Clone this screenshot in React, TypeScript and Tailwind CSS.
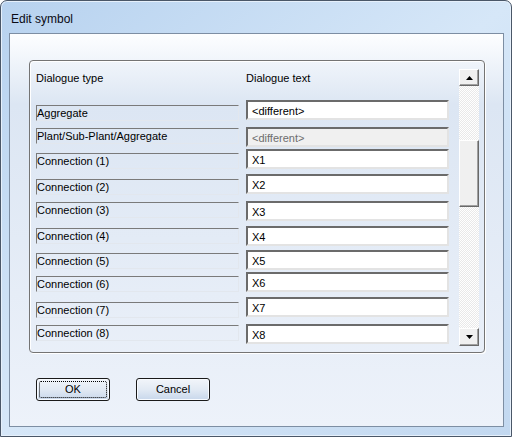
import React from 'react';

type Row = { label: string; value: string; gap: string; lab: string; disabled?: boolean };

// gap = space above the row, lab = label offset inside the row
const rows: Row[] = [
  { label: 'Aggregate', value: '<different>', gap: 'mt-0', lab: 'mt-[5px]' },
  { label: 'Plant/Sub-Plant/Aggregate', value: '<different>', gap: 'mt-[6px]', lab: 'mt-[1px]', disabled: true },
  { label: 'Connection (1)', value: 'X1', gap: 'mt-[2px]', lab: 'mt-[4px]' },
  { label: 'Connection (2)', value: 'X2', gap: 'mt-[5px]', lab: 'mt-[5px]' },
  { label: 'Connection (3)', value: 'X3', gap: 'mt-[6px]', lab: 'mt-[1px]' },
  { label: 'Connection (4)', value: 'X4', gap: 'mt-[5px]', lab: 'mt-[2px]' },
  { label: 'Connection (5)', value: 'X5', gap: 'mt-[4px]', lab: 'mt-[3px]' },
  { label: 'Connection (6)', value: 'X6', gap: 'mt-[2px]', lab: 'mt-[4px]' },
  { label: 'Connection (7)', value: 'X7', gap: 'mt-[5px]', lab: 'mt-[5px]' },
  { label: 'Connection (8)', value: 'X8', gap: 'mt-[6px]', lab: 'mt-[1px]' },
];

const Arrow = ({ up }: { up?: boolean }) => (
  <svg width="7" height="4" viewBox="0 0 7 4">
    {up ? <polygon points="3.5,0 7,4 0,4" fill="#000" /> : <polygon points="0,0 7,0 3.5,4" fill="#000" />}
  </svg>
);

const ScrollButton = ({ up, className }: { up?: boolean; className: string }) => (
  <div
    className={`${className} flex items-center justify-center border border-t-white border-l-white border-r-[#696969] border-b-[#696969] bg-[#f0f0f0] shadow-[inset_-1px_-1px_0_#a0a0a0]`}
  >
    <Arrow up={up} />
  </div>
);

const DialogButton = ({ label, focused }: { label: string; focused?: boolean }) => (
  <div className="flex h-[23px] w-[74px] items-center justify-center rounded-[3px] border border-[#1a1a1a] bg-linear-to-b from-[#f2f5fa] via-[#e2eaf4] via-50% to-[#c8d7eb] p-[2px] shadow-[inset_0_0_0_1px_#f8fbff]">
    <div
      className={`flex h-full w-full items-center justify-center rounded-[2px] border border-dotted ${focused ? 'border-black' : 'border-transparent'}`}
    >
      {label}
    </div>
  </div>
);

export default function App() {
  return (
    <div className="h-[437px] w-[512px] bg-white text-[11px] text-black" style={{ fontFamily: '"Liberation Sans", Arial, sans-serif' }}>
      <div className="flex h-full w-full flex-col rounded-t-[7px] border border-[#4a5768] bg-linear-to-br from-[#b7d2ef] via-[#d6e7f8] to-[#c2d8f0] pb-[9px] pl-[8px] pr-[7px] shadow-[inset_0_0_0_1px_#e6f0fb]">
        {/* Title bar */}
        <div className="h-[32px] pl-[2px] pt-[10px] text-[12px] leading-[16px] text-[#0a0a14]">Edit symbol</div>

        {/* Client area */}
        <div className="flex flex-1 flex-col border border-[#7d8ea3] bg-linear-to-b from-[#fdfeff] via-[#dce6f3] via-18% to-[#edf2fa]">
          {/* Group box */}
          <div className="ml-[19px] mt-[26px] flex h-[293px] w-[456px] rounded-[4px] border border-[#747474] pb-[6px] pl-[6px] pr-[5px] pt-[8px] shadow-[inset_1px_1px_0_#ffffff,1px_1px_0_#ffffff]">
            <div className="flex w-[413px] flex-col">
              <div className="mt-[2px] flex h-[14px] leading-[14px]">
                <span className="w-[210px]">Dialogue type</span>
                <span>Dialogue text</span>
              </div>
              <div className="mt-[15px] flex flex-col">
                {rows.map((r) => (
                  <div key={r.label} className={`flex items-start ${r.gap}`}>
                    <div
                      className={`${r.lab} h-[16px] w-[203px] border border-t-[#7a7a7a] border-l-[#7a7a7a] border-r-[#e2e7ee] border-b-[#e2e7ee] leading-[14px]`}
                    >
                      {r.label}
                    </div>
                    <div
                      className={`ml-[7px] h-[20px] w-[203px] border-2 border-t-[#6b6b6b] border-l-[#6b6b6b] border-r-[#e3e3e3] border-b-[#e3e3e3] pl-[4px] pt-[2px] leading-[15px] ${r.disabled ? 'bg-[#f0f0f0] text-[#6d6d6d]' : 'bg-white'}`}
                    >
                      {r.value}
                    </div>
                  </div>
                ))}
              </div>
            </div>

            {/* Scrollbar */}
            <div className="ml-[10px] flex w-[20px] flex-col">
              <ScrollButton up className="h-[17px]" />
              <div className="flex-1 bg-[repeating-conic-gradient(#ffffff_0_25%,#e9e9e9_0_50%)] bg-size-[2px_2px]">
                <div className="mt-[54px] h-[67px] border border-t-white border-l-white border-r-[#696969] border-b-[#696969] bg-[#f0f0f0] shadow-[inset_-1px_-1px_0_#a0a0a0]" />
              </div>
              <ScrollButton className="h-[18px]" />
            </div>
          </div>

          {/* Buttons */}
          <div className="ml-[26px] mt-[25px] flex gap-[26px]">
            <DialogButton label="OK" focused />
            <DialogButton label="Cancel" />
          </div>
        </div>
      </div>
    </div>
  );
}
